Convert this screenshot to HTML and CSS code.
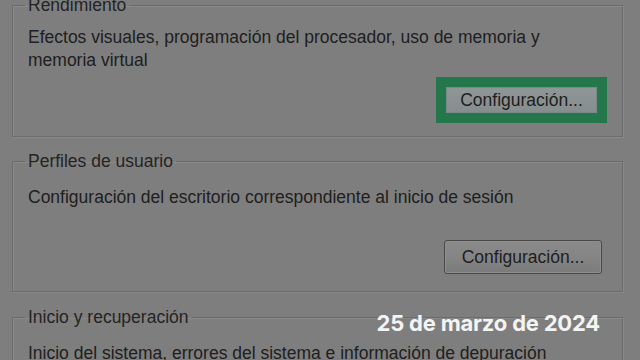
FILE: index.html
```html
<!DOCTYPE html>
<html lang="es">
<head>
<meta charset="utf-8">
<title>Opciones avanzadas</title>
<link rel="stylesheet" href="styles.css">
</head>
<body>
<div class="page">
  <fieldset class="group group-perf">
    <legend>Rendimiento</legend>
    <p class="desc">Efectos visuales, programación del procesador, uso de memoria y memoria virtual</p>
    <div class="actions">
      <span class="highlight"><button class="btn">Configuración...</button></span>
    </div>
  </fieldset>
  <fieldset class="group group-profiles">
    <legend>Perfiles de usuario</legend>
    <p class="desc">Configuración del escritorio correspondiente al inicio de sesión</p>
    <div class="actions">
      <button class="btn btn-plain">Configuración...</button>
    </div>
  </fieldset>
  <fieldset class="group group-startup">
    <legend>Inicio y recuperación</legend>
    <p class="desc">Inicio del sistema, errores del sistema e información de depuración</p>
  </fieldset>
</div>
<div class="date">25 de marzo de 2024</div>
</body>
</html>
```
FILE: styles.css
```css
html, body {
  margin: 0;
  padding: 0;
}
body {
  width: 640px;
  height: 360px;
  overflow: hidden;
  background: #7e7e7e;
  font-family: "Liberation Sans", Arial, sans-serif;
  font-size: 17.5px;
  color: #202020;
  position: relative;
}
.page {
  padding: 0 17px 0 12px;
  margin-top: -5px;
}
.group {
  margin: 0;
  padding: 0 15px 0 15px;
  border: 1px solid #6c6c6c;
  box-shadow: inset 1px 1px 0 #898989, 1px 1px 0 #898989;
  min-width: 0;
}
.group legend {
  padding: 0 3px;
  margin-left: -3px;
  line-height: 20px;
  color: #242424;
}
.desc {
  margin: 0;
  max-width: 560px;
  line-height: 23px;
}
.group-perf {
  padding-top: 11px;
  padding-bottom: 13px;
}
.group-perf .actions {
  margin-top: 5px;
}
.group-profiles {
  margin-top: 14px;
  padding-top: 15px;
  padding-bottom: 17px;
}
.group-profiles .actions {
  margin-top: 31px;
  padding-right: 5px;
}
.group-startup {
  margin-top: 15px;
  padding-top: 15px;
  height: 80px;
}
.actions {
  display: flex;
  justify-content: flex-end;
}
.highlight {
  display: inline-flex;
  border: 10px solid #24774a;
  box-shadow: inset 0 0 0 1px #2f8a57;
}
.btn {
  font: inherit;
  color: #1e1e1e;
  margin: 0;
  width: 151px;
  height: 26px;
  padding: 0;
  line-height: 24px;
  border: 1px solid #7a8a88;
  background: linear-gradient(#8f9696, #868d8e);
  border-radius: 0;
}
.btn-plain {
  width: 158px;
  height: 34px;
  line-height: 32px;
  border: 1px solid #4a4a4a;
  border-radius: 3px;
  background: linear-gradient(#8a8a8a 0%, #858585 50%, #7b7b7b 100%);
  box-shadow: inset 0 0 0 1px #8e8e8e;
}
.date {
  position: absolute;
  right: 40px;
  top: 308px;
  font-family: Inter, "Open Sans", sans-serif;
  font-weight: 700;
  font-size: 22px;
  line-height: 30px;
  color: #f4f4f4;
  letter-spacing: -0.2px;
}
```
